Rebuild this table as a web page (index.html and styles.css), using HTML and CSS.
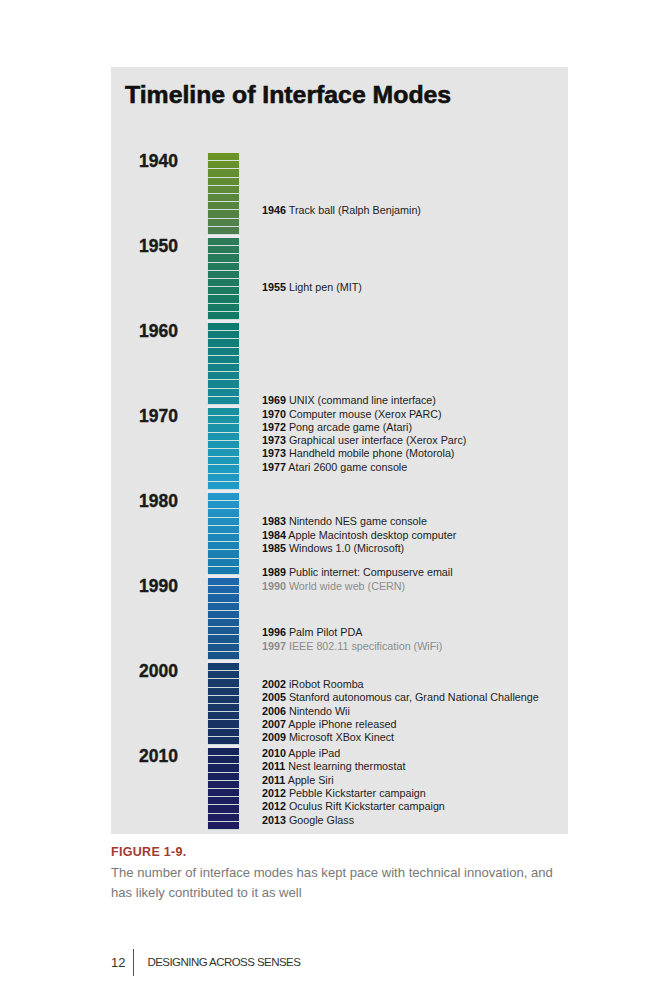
FILE: index.html
```html
<!DOCTYPE html>
<html lang="en">
<head>
<meta charset="utf-8">
<title>Timeline of Interface Modes</title>
<link rel="stylesheet" href="styles.css">
</head>
<body>
<div class="page">
  <figure class="fig">
    <div class="panel">
      <h1 class="title">Timeline of Interface Modes</h1>
      <div class="chart">
        <div class="years">
          <div class="yr">1940</div>
          <div class="yr">1950</div>
          <div class="yr">1960</div>
          <div class="yr">1970</div>
          <div class="yr">1980</div>
          <div class="yr">1990</div>
          <div class="yr">2000</div>
          <div class="yr">2010</div>
        </div>
        <div class="bar">
          <div class="decade d1940"></div>
          <div class="decade d1950"></div>
          <div class="decade d1960"></div>
          <div class="decade d1970"></div>
          <div class="decade d1980"></div>
          <div class="decade d1990"></div>
          <div class="decade d2000"></div>
          <div class="decade d2010"></div>
        </div>
        <div class="events">
          <div class="grp g1946">
            <p><b>1946</b> Track ball (Ralph Benjamin)</p>
          </div>
          <div class="grp g1955">
            <p><b>1955</b> Light pen (MIT)</p>
          </div>
          <div class="grp g1969">
            <p><b>1969</b> UNIX (command line interface)</p>
            <p><b>1970</b> Computer mouse (Xerox PARC)</p>
            <p><b>1972</b> Pong arcade game (Atari)</p>
            <p><b>1973</b> Graphical user interface (Xerox Parc)</p>
            <p><b>1973</b> Handheld mobile phone (Motorola)</p>
            <p><b>1977</b> Atari 2600 game console</p>
          </div>
          <div class="grp g1983">
            <p><b>1983</b> Nintendo NES game console</p>
            <p><b>1984</b> Apple Macintosh desktop computer</p>
            <p><b>1985</b> Windows 1.0 (Microsoft)</p>
          </div>
          <div class="grp g1989">
            <p><b>1989</b> Public internet: Compuserve email</p>
            <p class="muted"><b>1990</b> World wide web (CERN)</p>
          </div>
          <div class="grp g1996">
            <p><b>1996</b> Palm Pilot PDA</p>
            <p class="muted"><b>1997</b> IEEE 802.11 specification (WiFi)</p>
          </div>
          <div class="grp g2002">
            <p><b>2002</b> iRobot Roomba</p>
            <p><b>2005</b> Stanford autonomous car, Grand National Challenge</p>
            <p><b>2006</b> Nintendo Wii</p>
            <p><b>2007</b> Apple iPhone released</p>
            <p><b>2009</b> Microsoft XBox Kinect</p>
          </div>
          <div class="grp g2010">
            <p><b>2010</b> Apple iPad</p>
            <p><b>2011</b> Nest learning thermostat</p>
            <p><b>2011</b> Apple Siri</p>
            <p><b>2012</b> Pebble Kickstarter campaign</p>
            <p><b>2012</b> Oculus Rift Kickstarter campaign</p>
            <p><b>2013</b> Google Glass</p>
          </div>
        </div>
      </div>
    </div>
    <figcaption class="caption">
      <div class="cap-label">FIGURE 1-9.</div>
      <div class="cap-text">The number of interface modes has kept pace with technical innovation, and has likely contributed to it as well</div>
    </figcaption>
  </figure>
  <footer class="folio">
    <span class="folio-num">12</span>
    <span class="folio-rule"></span>
    <span class="folio-title">DESIGNING ACROSS SENSES</span>
  </footer>
</div>
</body>
</html>
```

FILE: styles.css
```css
html, body {
  margin: 0;
  padding: 0;
  background: #ffffff;
}

.page {
  padding: 67px 0 0 111px;
  font-family: "Liberation Sans", Arial, sans-serif;
  color: #1a1a1a;
}

.fig {
  margin: 0;
  width: 457px;
}

.panel {
  background: #e5e5e5;
  padding: 13px 14px 1px 14px;
}

.title {
  margin: 0;
  font-size: 24.8px;
  line-height: 30px;
  font-weight: 700;
  color: #111111;
  letter-spacing: 0;
  -webkit-text-stroke: 0.6px #111111;
}

.chart {
  margin: 43px 0 0 14px;
  display: grid;
  grid-template-columns: 68px 33px 1fr;
  align-items: start;
}

.years {
  display: flex;
  flex-direction: column;
}

.yr {
  height: 85px;
  font-size: 17.5px;
  line-height: 16px;
  font-weight: 700;
  color: #1a1a1a;
  -webkit-text-stroke: 0.4px #1a1a1a;
}

.bar {
  display: flex;
  flex-direction: column;
  gap: 3px;
  background: #ece9f0;
}

.decade {
  height: 82px;
  box-sizing: border-box;
  border-left: 1px solid #d3e4e2;
  border-right: 1px solid #d3e4e2;
  background-image:
    repeating-linear-gradient(to bottom,
      rgba(0, 0, 0, 0) 0px,
      rgba(0, 0, 0, 0) 7.2px,
      rgba(222, 236, 232, 0.9) 7.2px,
      rgba(222, 236, 232, 0.9) 8.2px),
    var(--grad);
}

.d1940 { --grad: linear-gradient(to bottom, #6c9424, #4c7c50); }
.d1950 { --grad: linear-gradient(to bottom, #2f7a58, #117a66); }
.d1960 { --grad: linear-gradient(to bottom, #0f7a70, #17899a); }
.d1970 { --grad: linear-gradient(to bottom, #18919e, #1f9cca); }
.d1980 { --grad: linear-gradient(to bottom, #2398cc, #1778aa); }
.d1990 { --grad: linear-gradient(to bottom, #1d68ad, #1a5286); }
.d2000 { --grad: linear-gradient(to bottom, #183f6f, #172e60); }
.d2010 { --grad: linear-gradient(to bottom, #15255b, #1f1a5e); }

.events {
  padding-left: 22px;
  font-size: 10.75px;
  line-height: 13.3px;
  color: #1c1c1c;
}

.grp p {
  margin: 0;
  white-space: nowrap;
}

.grp b {
  font-weight: 700;
  color: #111111;
}

.grp .muted,
.grp .muted b {
  color: #8c8c8c;
}

.g1946 { margin-top: 51.3px; }
.g1955 { margin-top: 63.7px; }
.g1969 { margin-top: 99.7px; }
.g1983 { margin-top: 41.2px; }
.g1989 { margin-top: 11.1px; }
.g1996 { margin-top: 33.4px; }
.g2002 { margin-top: 25.4px; }
.g2010 { margin-top: 2.5px; }

.caption {
  margin: 10px 0 0 0;
}

.cap-label {
  font-size: 12.5px;
  line-height: 16px;
  font-weight: 700;
  letter-spacing: 0.3px;
  color: #a33a30;
}

.cap-text {
  margin-top: 3px;
  font-size: 13.1px;
  line-height: 19.5px;
  color: #787878;
}

.folio {
  margin-top: 46px;
  display: flex;
  align-items: center;
  height: 28px;
  color: #333333;
}

.folio-num {
  font-size: 13px;
}

.folio-rule {
  width: 1px;
  height: 27px;
  background: #555555;
  margin: 0 13px 0 8px;
}

.folio-title {
  font-size: 11.5px;
  letter-spacing: -0.55px;
}
```
